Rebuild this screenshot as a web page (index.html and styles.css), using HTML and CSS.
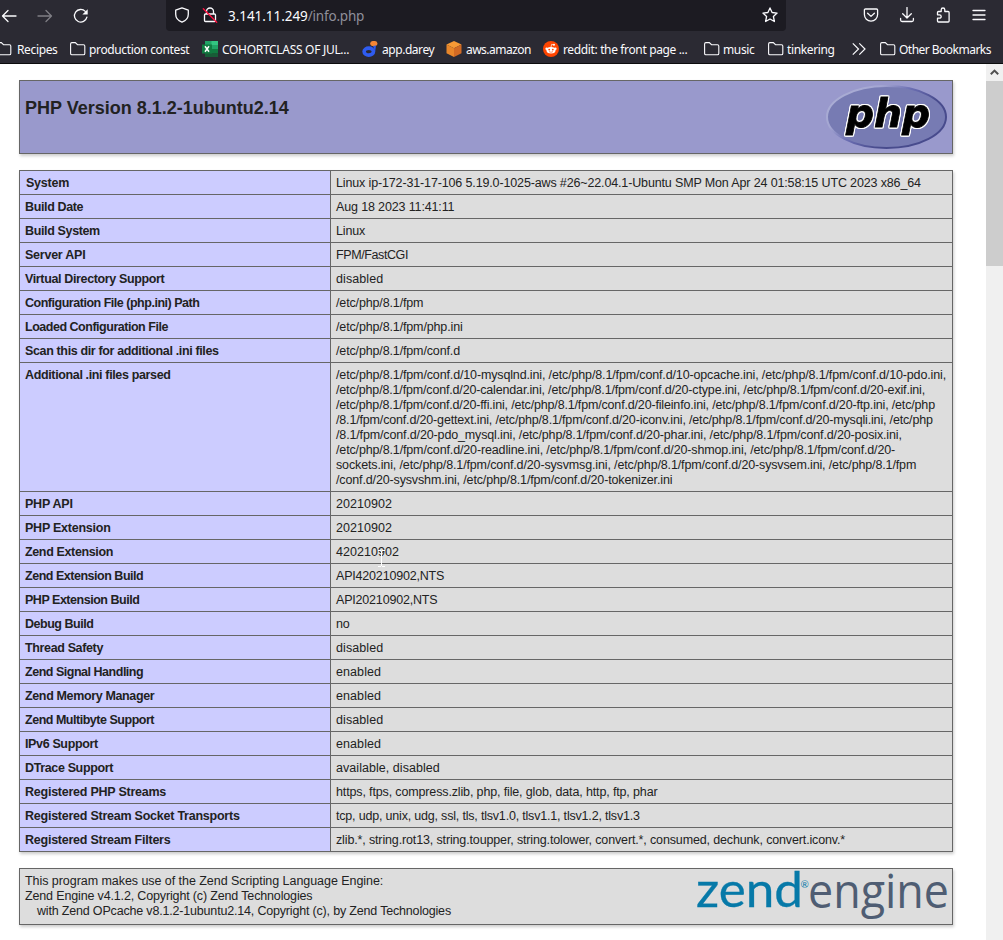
FILE: index.html
```html
<!DOCTYPE html>
<html lang="en">
<head>
<meta charset="utf-8">
<title>PHP 8.1.2-1ubuntu2.14 - phpinfo()</title>
<link rel="stylesheet" href="styles.css">
</head>
<body>
<svg width="0" height="0" class="defs">
  <symbol id="folder" viewBox="0 0 16 16"><path d="M.6 12.500V2.900q0-1.300 1.300-1.300h3.400l2.200 2.100h6q1.300 0 1.300 1.300v7.500q0 1.300-1.300 1.300H1.900q-1.300 0-1.300-1.300z" fill="none" stroke="#fbfbfe" stroke-width="1.100"/></symbol>
</svg>
<header class="chrome">
  <div class="navbar">
    <div class="nav-left">
      <svg class="ico" viewBox="0 0 16 16"><path d="M15 8H1.500M7 2.500L1.500 8L7 13.500"/></svg>
      <svg class="ico dim" viewBox="0 0 16 16"><path d="M1 8h13.500M9 2.500L14.500 8L9 13.500"/></svg>
      <svg class="ico" viewBox="0 0 16 16"><path d="M13.900 9.200A6.300 6.300 0 1 1 12.300 3.400"/><path d="M14.700 1.200v5.300H9.400z" fill="#fbfbfe" stroke="none"/></svg>
    </div>
    <div class="urlbar">
      <svg class="ico shield" viewBox="0 0 16 16"><path d="M8 .9l6.300 2.300v4c0 3.700-2.600 6.500-6.300 8-3.700-1.500-6.300-4.300-6.300-8v-4z"/></svg>
      <svg class="ico lock" viewBox="0 0 16 16"><path d="M4.500 7V4.500a3.500 3.500 0 0 1 7 0V7M3.500 7h9q1 0 1 1v5.500q0 1-1 1h-9q-1 0-1-1V8q0-1 1-1z"/><path class="slash" d="M1.300 1.800L14.700 15.200"/></svg>
      <span class="url"><b>3.141.11.249</b>/info.php</span>
      <svg class="ico star" viewBox="0 0 16 16"><path d="M8 .9l2.100 4.600 5 .6-3.700 3.400 1 5L8 12l-4.400 2.500 1-5L.9 6.100l5-.6z"/></svg>
    </div>
    <div class="nav-right">
      <svg class="ico" viewBox="0 0 16 16"><path d="M2.500 2h11q1.100 0 1.100 1.100V7.500a6.600 6.600 0 0 1-13.200 0V3.100Q1.400 2 2.500 2zM4.600 6.200L8 9.400l3.400-3.200"/></svg>
      <svg class="ico" viewBox="0 0 16 16"><path d="M8 .5v10.200M3.700 6.800L8 11l4.300-4.200M1.600 11.500v1.500q0 1.500 1.500 1.500h9.800q1.500 0 1.500-1.500v-1.500"/></svg>
      <svg class="ico" viewBox="0 0 16 16"><path d="M2.500 5.500q0-1 1-1H6.200V2.800a1.800 1.800 0 0 1 3.600 0V4.500h3.300q1 0 1 1V14q0 1-1 1H3.500q-1 0-1-1v-2.800h2a1.700 1.700 0 0 0 0-3.400h-2z"/></svg>
      <svg class="ico" viewBox="0 0 16 16"><path d="M2 3.500h12M2 8h12M2 12.500h12"/></svg>
    </div>
  </div>
  <nav class="bookmarks">
    <a class="bm w-recipes"><svg viewBox="0 0 16 16"><use href="#folder"/></svg><span>Recipes</span></a>
    <a class="bm w-contest"><svg viewBox="0 0 16 16"><use href="#folder"/></svg><span>production contest</span></a>
    <a class="bm site w-cohort"><svg viewBox="0 0 16 16"><path fill="#21a366" d="M3 0h13v16H3z"/><path fill="#33c481" d="M9.500 0H16v4H9.500z"/><path fill="#107c41" d="M3 4h6.500v8H3z"/><path fill="#185c37" d="M3 11h13v5H3z"/><path fill="#107c41" d="M9.500 8H16v4H9.500zM0 3.500h10v9H0z"/><path stroke="#fff" stroke-width="1.500" d="M3 5.200l4 5.600M7 5.200l-4 5.600"/></svg><span>COHORTCLASS OF JUL...</span></a>
    <a class="bm site w-darey"><svg viewBox="0 0 16 16"><ellipse cx="11.800" cy="2.600" rx="3.600" ry="2.700" fill="#f58634"/><path d="M11 5l3-.5-.8 6z" fill="#2f5cf0"/><ellipse cx="6.800" cy="10.600" rx="4.700" ry="3.500" fill="none" stroke="#2f5cf0" stroke-width="3.600"/></svg><span>app.darey</span></a>
    <a class="bm site w-aws"><svg viewBox="0 0 16 16"><path fill="#f79a35" d="M8 0l7.500 3.500L8 7.200.5 3.500z"/><path fill="#e8862a" d="M.5 3.500L8 7.200V16L.5 12.300z"/><path fill="#d26a24" d="M15.500 3.500L8 7.200V16l7.500-3.700z"/></svg><span>aws.amazon</span></a>
    <a class="bm site w-reddit"><svg viewBox="0 0 16 16"><circle cx="8" cy="8" r="8" fill="#ff4500"/><g fill="#fff"><ellipse cx="8" cy="9.200" rx="4.500" ry="3.200"/><circle cx="3.600" cy="7.700" r="1.200"/><circle cx="12.400" cy="7.700" r="1.200"/><circle cx="11" cy="3.800" r="1"/></g><path d="M8 6.200l.6-2.800 2.400.5" fill="none" stroke="#fff" stroke-width=".7"/><circle cx="6.200" cy="8.600" r=".9" fill="#ff4500"/><circle cx="9.800" cy="8.600" r=".9" fill="#ff4500"/><path d="M6 10.600q2 1.300 4 0" stroke="#ff4500" fill="none" stroke-width=".6"/></svg><span>reddit: the front page ...</span></a>
    <a class="bm w-music"><svg viewBox="0 0 16 16"><use href="#folder"/></svg><span>music</span></a>
    <a class="bm w-tinker"><svg viewBox="0 0 16 16"><use href="#folder"/></svg><span>tinkering</span></a>
    <a class="bm w-more"><svg viewBox="0 0 16 16" fill="none" stroke="#fbfbfe" stroke-width="1.200"><path d="M.8 2.300L6.500 8 .8 13.700M7.300 2.300L13 8l-5.700 5.700"/></svg></a>
    <a class="bm w-other"><svg viewBox="0 0 16 16"><use href="#folder"/></svg><span>Other Bookmarks</span></a>
  </nav>
</header>
<div class="viewport">
  <main class="page">
    <section class="box banner">
      <h1>PHP Version 8.1.2-1ubuntu2.14</h1>
      <svg class="php-logo" width="122" height="66" viewBox="0 0 122 66">
        <defs><linearGradient id="rim" x1="0" y1="0" x2="1" y2=".65"><stop offset="0" stop-color="#aeb2d5"/><stop offset=".32" stop-color="#a4a6d2"/><stop offset=".52" stop-color="#6b6eb2"/><stop offset=".75" stop-color="#484b8d"/><stop offset="1" stop-color="#484b8d"/></linearGradient></defs>
        <ellipse cx="60.500" cy="33" rx="59.500" ry="31" fill="#777bb3" stroke="url(#rim)" stroke-width="2"/>
        <text class="php-word" x="20" y="43" textLength="84" lengthAdjust="spacingAndGlyphs">php</text>
      </svg>
    </section>
    <table class="box info">
      <tr><th class="loose first">System</th><td>Linux ip-172-31-17-106 5.19.0-1025-aws #26~22.04.1-Ubuntu SMP Mon Apr 24 01:58:15 UTC 2023 x86_64</td></tr>
      <tr><th>Build Date</th><td>Aug 18 2023 11:41:11</td></tr>
      <tr><th>Build System</th><td>Linux</td></tr>
      <tr><th class="loose">Server API</th><td class="tight">FPM/FastCGI</td></tr>
      <tr><th>Virtual Directory Support</th><td class="wide">disabled</td></tr>
      <tr><th class="tight">Configuration File (php.ini) Path</th><td>/etc/php/8.1/fpm</td></tr>
      <tr><th class="tight">Loaded Configuration File</th><td>/etc/php/8.1/fpm/php.ini</td></tr>
      <tr><th>Scan this dir for additional .ini files</th><td>/etc/php/8.1/fpm/conf.d</td></tr>
      <tr><th>Additional .ini files parsed</th><td>/etc/php/8.1/fpm/conf.d/10-mysqlnd.ini, /etc/php/8.1/fpm/conf.d/10-opcache.ini, /etc/php/8.1/fpm/conf.d/10-pdo.ini,<br><span class="files">/etc/php/8.1/fpm/conf.d/20-calendar.ini, /etc/php/8.1/fpm/conf.d/20-ctype.ini, /etc/php/8.1/fpm/conf.d/20-exif.ini,<br>/etc/php/8.1/fpm/conf.d/20-ffi.ini, /etc/php/8.1/fpm/conf.d/20-fileinfo.ini, /etc/php/8.1/fpm/conf.d/20-ftp.ini, /etc/php<br>/8.1/fpm/conf.d/20-gettext.ini, /etc/php/8.1/fpm/conf.d/20-iconv.ini, /etc/php/8.1/fpm/conf.d/20-mysqli.ini, /etc/php</span><br>/8.1/fpm/conf.d/20-pdo_mysql.ini, /etc/php/8.1/fpm/conf.d/20-phar.ini, /etc/php/8.1/fpm/conf.d/20-posix.ini,<br>/etc/php/8.1/fpm/conf.d/20-readline.ini, /etc/php/8.1/fpm/conf.d/20-shmop.ini, /etc/php/8.1/fpm/conf.d/20-<br>sockets.ini, /etc/php/8.1/fpm/conf.d/20-sysvmsg.ini, /etc/php/8.1/fpm/conf.d/20-sysvsem.ini, /etc/php/8.1/fpm<br>/conf.d/20-sysvshm.ini, /etc/php/8.1/fpm/conf.d/20-tokenizer.ini</td></tr>
      <tr><th class="loose">PHP API</th><td class="num">20210902</td></tr>
      <tr><th class="loose">PHP Extension</th><td class="num">20210902</td></tr>
      <tr><th>Zend Extension</th><td class="num"><span class="pointed">420210902<svg class="ibeam" width="7" height="17" viewBox="0 0 7 17"><path d="M0 .5h3M4 .5h3M3.500 1v15M0 16.500h3M4 16.500h3" stroke="#fff" fill="none"/></svg></span></td></tr>
      <tr><th class="tight">Zend Extension Build</th><td class="snug">API420210902,NTS</td></tr>
      <tr><th class="tight">PHP Extension Build</th><td class="snug">API20210902,NTS</td></tr>
      <tr><th class="tight">Debug Build</th><td>no</td></tr>
      <tr><th>Thread Safety</th><td class="wide">disabled</td></tr>
      <tr><th class="tight">Zend Signal Handling</th><td class="wide">enabled</td></tr>
      <tr><th>Zend Memory Manager</th><td class="wide">enabled</td></tr>
      <tr><th class="tight">Zend Multibyte Support</th><td class="wide">disabled</td></tr>
      <tr><th>IPv6 Support</th><td class="wide">enabled</td></tr>
      <tr><th>DTrace Support</th><td class="num">available, disabled</td></tr>
      <tr><th class="loose">Registered PHP Streams</th><td>https, ftps, compress.zlib, php, file, glob, data, http, ftp, phar</td></tr>
      <tr><th class="loose">Registered Stream Socket Transports</th><td class="snug">tcp, udp, unix, udg, ssl, tls, tlsv1.0, tlsv1.1, tlsv1.2, tlsv1.3</td></tr>
      <tr><th class="loose">Registered Stream Filters</th><td>zlib.*, string.rot13, string.toupper, string.tolower, convert.*, consumed, dechunk, convert.iconv.*</td></tr>
    </table>
    <section class="box zend">
      <p><span class="lead">This program makes use of the Zend Scripting Language Engine:</span><br>Zend Engine v4.1.2, Copyright (c) Zend Technologies<br><span class="indent">with Zend OPcache v8.1.2-1ubuntu2.14, Copyright (c), by Zend Technologies</span></p>
      <svg class="zend-logo" width="254" height="54" viewBox="0 0 254 54">
        <text class="zend-word" x="2" y="38" textLength="107" lengthAdjust="spacingAndGlyphs">zend</text>
        <text class="zend-reg" x="106.500" y="19">®</text>
        <text class="engine-word" x="114" y="38.500" textLength="141" lengthAdjust="spacingAndGlyphs">engine</text>
      </svg>
    </section>
  </main>
  <div class="scrollbar">
    <svg width="17" height="17" viewBox="0 0 17 17"><path d="M4.800 10.300l3.700-3.700 3.700 3.700" fill="none" stroke="#505050" stroke-width="2"/></svg>
    <div class="thumb"></div>
  </div>
</div>
</body>
</html>
```
FILE: styles.css
```css
* { box-sizing: border-box; }
body { margin: 0; width: 1003px; height: 940px; overflow: hidden; background: #fff; color: #222; font-family: "Liberation Sans", Arial, sans-serif; }
.defs { display: none; }

/* Browser chrome */
.chrome { height: 64px; background: #2b2a33; border-bottom: 1px solid #0c0c0d; color: #fbfbfe; font-family: "Noto Sans", sans-serif; overflow: hidden; }
.navbar { display: flex; height: 31px; }
.ico { width: 16px; height: 16px; flex: none; fill: none; stroke: #fbfbfe; stroke-width: 1.3; stroke-linejoin: round; stroke-linecap: round; }
.dim { opacity: .4; }
.nav-left { width: 166px; display: flex; gap: 20px; padding: 8px 0 0 1px; }
.urlbar { width: 620px; height: 31px; background: #1c1b22; border-radius: 0 0 4px 4px; display: flex; padding: 7px 8px 0; }
.shield { margin-right: 12px; }
.lock { margin-right: 10px; }
.slash { stroke: #ff0f3f; }
.url { flex: 1; font-size: 13.5px; line-height: 18px; color: #8f8f9a; letter-spacing: -.2px; }
.url b { font-weight: 400; color: #fbfbfe; letter-spacing: -.05px; }
.nav-right { display: flex; gap: 20px; padding: 7px 0 0 77px; }
.bookmarks { display: flex; height: 31px; margin-left: -4px; padding-top: 10px; }
.bm { display: flex; gap: 3px; flex: none; font-size: 12px; line-height: 16px; letter-spacing: -.36px; white-space: nowrap; }
.bm span { padding-top: 1px; }
.bm.site { gap: 4px; }
.bm svg { width: 16px; height: 16px; flex: none; }
.w-recipes { width: 74px; gap: 5px; }
.w-contest { width: 132px; }
.w-cohort { width: 160px; letter-spacing: -.3px; }
.w-darey { width: 84px; letter-spacing: -.45px; }
.w-aws { width: 97px; letter-spacing: -.52px; }
.w-reddit { width: 161px; }
.w-music { width: 64px; }
.w-tinker { width: 84px; }
.w-more { width: 28px; }
.w-other { letter-spacing: -.52px; }

/* Page */
.viewport { display: flex; height: 876px; }
.page { width: 986px; padding: 16px 33px 0 19px; display: flex; flex-direction: column; overflow: hidden; }
.box { border: 1px solid #666; box-shadow: 1px 2px 3px #ccc; flex: none; }
.banner { height: 74px; background: #99c; display: flex; justify-content: space-between; padding: 3px 4px 0 5px; margin-bottom: 16px; }
h1 { margin: 13px 0 0; font-size: 18px; line-height: 22px; }
.php-word { font: italic 700 39px "DejaVu Sans", sans-serif; fill: #000; stroke: #000; stroke-width: .8px; filter: drop-shadow(1px 0 0 #fff) drop-shadow(-1px 0 0 #fff) drop-shadow(0 1px 0 #fff) drop-shadow(0 -1px 0 #fff); }
.info { width: 934px; border-collapse: collapse; table-layout: fixed; font-size: 12.5px; line-height: 15px; margin-bottom: 16px; }
.info th, .info td { border: 1px solid #666; padding: 5px 5px 3px; height: 24px; vertical-align: baseline; text-align: left; white-space: nowrap; }
.info th { width: 311px; background: #ccf; letter-spacing: -.36px; }
.info th.loose { letter-spacing: -.24px; }
.info th.tight { letter-spacing: -.48px; }
.info th.first { padding-left: 6px; }
.info td { background: #ddd; letter-spacing: -.14px; }
.info td.num { letter-spacing: .05px; }
.info td.wide { letter-spacing: .08px; }
.info td.tight { letter-spacing: -.4px; }
.info .snug { letter-spacing: -.19px; }
.info .files { letter-spacing: -.165px; }
.pointed { position: relative; }
.ibeam { position: absolute; left: 42px; top: 5px; }
.zend { height: 57px; background: #ddd; display: flex; justify-content: space-between; padding: 5px 4px 0 5px; font-size: 12.5px; line-height: 15px; letter-spacing: -.15px; }
.zend p { margin: 0; }
.lead { letter-spacing: -.05px; }
.indent { padding-left: 12px; letter-spacing: -.18px; }
.zend-logo { margin-top: -5px; overflow: visible; letter-spacing: 0; }
.zend-word { font: 400 48px Lato, sans-serif; fill: #0679a8; stroke: #0679a8; stroke-width: .3px; }
.zend-reg { font: 400 10px Lato, sans-serif; fill: #0679a8; }
.engine-word { font: 400 47px "Open Sans", sans-serif; fill: #4f5d73; }
.scrollbar { width: 17px; background: #f0f0f0; display: flex; flex-direction: column; }
.thumb { height: 185px; background: #cdcdcd; }
```
